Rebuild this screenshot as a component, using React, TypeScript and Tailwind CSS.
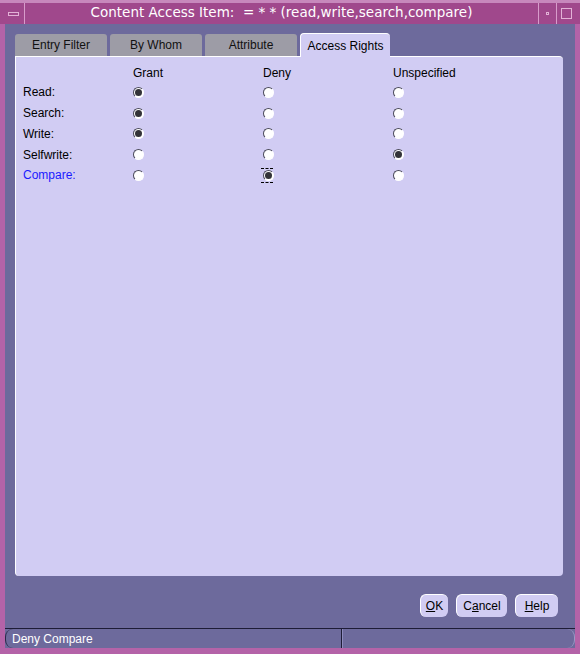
import React from "react";

const FONT = { fontFamily: '"Liberation Sans", Arial, sans-serif' };
const TITLE_FONT = { fontFamily: '"DejaVu Sans", "Liberation Sans", sans-serif' };

const rows = [
  { label: "Read:", value: 0 },
  { label: "Search:", value: 0 },
  { label: "Write:", value: 0 },
  { label: "Selfwrite:", value: 2 },
  { label: "Compare:", value: 1, active: true },
];

function Radio({ checked, focused }: { checked: boolean; focused?: boolean }) {
  return (
    <div className="relative flex h-[13px] w-[13px] items-center justify-center">
      <div className="flex h-[11px] w-[11px] items-center justify-center rounded-full border border-[#4a4a5a] border-b-white border-r-white bg-white">
        {checked && <div className="h-[7px] w-[7px] rounded-full bg-[#333338]" />}
      </div>
      {focused && (
        <div className="absolute -left-[1px] -top-[1px] h-[15px] w-[12px] border-y border-dashed border-black" />
      )}
    </div>
  );
}

function Tab({ label, active }: { label: string; active?: boolean }) {
  if (active) {
    return (
      <div className="relative z-10 -mb-[1px] flex h-[24px] w-[90px] items-center justify-center rounded-t-[4px] border-l border-t border-white bg-[#d1ccf3] text-[12px] text-black">
        {label}
      </div>
    );
  }
  return (
    <div className="mt-[1px] flex h-[22px] w-[92px] items-center justify-center rounded-t-[3px] bg-[#9d9ca6] text-[12px] text-[#111]">
      {label}
    </div>
  );
}

function Btn({ children, w }: { children: React.ReactNode; w: string }) {
  return (
    <div
      className={`flex h-[23px] ${w} items-center justify-center rounded-[6px] border-l border-t border-white bg-[#d1ccf3] text-[12px] text-black`}
    >
      {children}
    </div>
  );
}

export default function App() {
  return (
    <div className="flex h-[654px] w-[580px] flex-col bg-[#b463a8]" style={FONT}>
      {/* title bar */}
      <div className="flex h-[24px] shrink-0 items-stretch border-t-[3px] border-[#c788bc] bg-[#a0488c]">
        <div className="flex w-[25px] items-center justify-center border-r border-[#d89ccb] pl-[3px]">
          <div className="h-[4px] w-[11px] border border-[#e2b2d6]" />
        </div>
        <div className="flex flex-1 items-center justify-center pb-[2px] text-[13.5px] text-white" style={TITLE_FONT}>
          Content Access Item:&nbsp; = * * (read,write,search,compare)
        </div>
        <div className="flex w-[19px] items-center justify-center border-x border-[#d89ccb]">
          <div className="h-[3px] w-[3px] border border-[#e2b2d6]" />
        </div>
        <div className="flex w-[23px] items-center justify-center pr-[4px]">
          <div className="h-[11px] w-[11px] border border-[#e2b2d6]" />
        </div>
      </div>

      {/* body */}
      <div className="mx-[5px] mb-[6px] flex flex-1 flex-col bg-[#6d6a9c]">
        <div className="flex flex-1 flex-col pl-[10px] pr-[12px] pt-[9px]">
          <div className="flex items-end gap-[3px]">
            <Tab label="Entry Filter" />
            <Tab label="By Whom" />
            <Tab label="Attribute" />
            <Tab label="Access Rights" active />
          </div>
          <div className="h-[520px] rounded-b-[4px] rounded-tr-[4px] border-l border-t border-white bg-[#d1ccf3] pl-[7px] pt-[9px] text-[12px] text-black">
            <div className="grid grid-cols-[110px_130px_130px_1fr] items-center">
              <div />
              <div className="h-[14px] leading-[14px]">Grant</div>
              <div className="h-[14px] leading-[14px]">Deny</div>
              <div className="h-[14px] leading-[14px]">Unspecified</div>
            </div>
            <div className="mt-[2px] flex flex-col">
              {rows.map((r) => (
                <div key={r.label} className="grid h-[20.75px] grid-cols-[109px_130px_130px_1fr] items-center">
                  <div className={r.active ? "text-[#1a1aff]" : ""}>{r.label}</div>
                  {[0, 1, 2].map((c) => (
                    <Radio key={c} checked={r.value === c} focused={r.active && c === 1} />
                  ))}
                </div>
              ))}
            </div>
          </div>
          <div className="mt-[18px] flex justify-end gap-[8px] pr-[5px]">
            <Btn w="w-[28px]">
              <span className="underline">O</span>K
            </Btn>
            <Btn w="w-[51px]">
              C<span className="underline">a</span>ncel
            </Btn>
            <Btn w="w-[43px]">
              <span className="underline">H</span>elp
            </Btn>
          </div>
        </div>
        {/* status bar */}
        <div className="mt-[11px] flex h-[20px] shrink-0 border-t border-[#1e1c36]">
          <div className="flex w-[336px] items-center rounded-bl-[8px] rounded-tl-[8px] border-l border-[#2a2848] pl-[6px] text-[12px] text-white">
            Deny Compare
          </div>
          <div className="w-[2px] border-l border-[#1e1c36] bg-[#8e8cbe]" />
          <div className="flex-1 rounded-r-[8px] border-r border-[#9b99c6]" />
        </div>
      </div>
    </div>
  );
}
